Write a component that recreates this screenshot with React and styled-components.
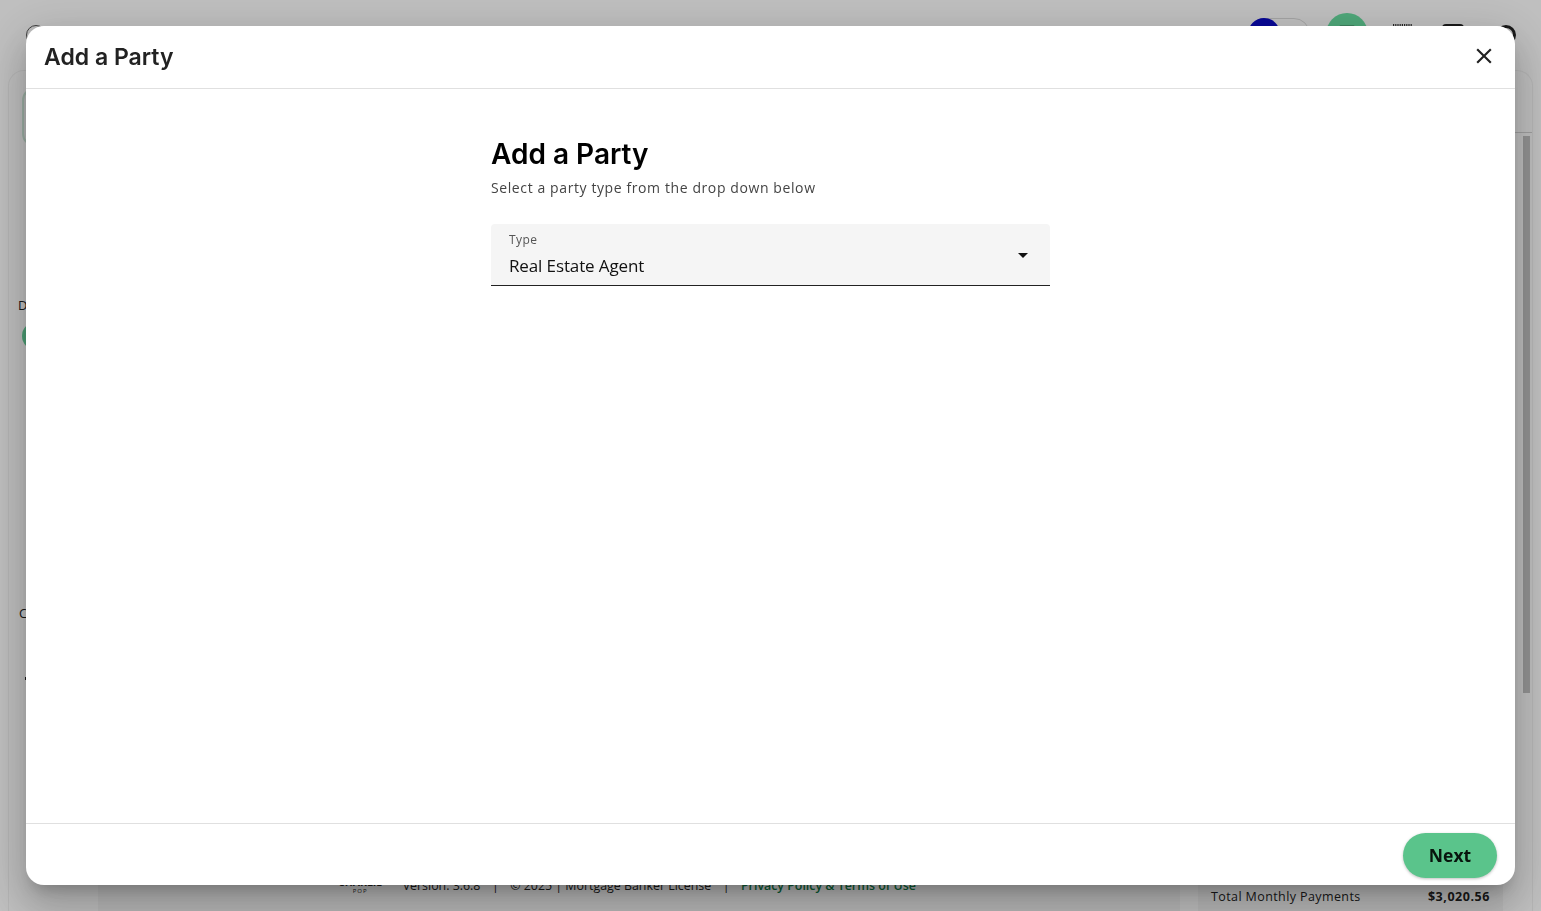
import React from "react";
import styled, { createGlobalStyle } from "styled-components";
import { MessageSquare } from "lucide-react";

const Global = createGlobalStyle`
  html, body { margin: 0; padding: 0; height: 100%; overflow: hidden; background: #fff; }
  body { font-family: "Open Sans", "Noto Sans", sans-serif; }
  * { box-sizing: border-box; }
`;

const Page = styled.div`
  width: 1541px;
  height: 911px;
  display: flex;
  flex-direction: column;
  overflow: hidden;
  color: #222;
`;
const TopBar = styled.header`
  height: 70px;
  flex: none;
  display: flex;
  align-items: flex-start;
  padding: 13px 25px 0 26px;
`;
const CornerMark = styled.div`
  width: 20px;
  height: 20px;
  margin-top: 12px;
  margin-right: auto;
  border: 1.5px solid #555;
  border-radius: 50%;
`;
const Toggle = styled.div`
  width: 62px;
  height: 32px;
  margin-top: 5px;
  margin-right: 16px;
  border: 1px solid #ddd;
  border-radius: 16px;
  display: flex;
`;
const ToggleKnob = styled.span`
  width: 32px;
  height: 32px;
  margin: -1px 0 0 -1px;
  border-radius: 50%;
  background: #0a0ac8;
`;
const Avatar = styled.div`
  width: 42px;
  height: 42px;
  border-radius: 50%;
  background: #69dfa2;
  color: #111;
  display: flex;
  align-items: center;
  justify-content: center;
  margin-right: 25px;
`;
const CalendarGlyph = styled.svg`
  width: 19px;
  height: 24px;
  margin-top: 10px;
  margin-right: 30px;
  color: #333;
`;
const ChatBox = styled.div`
  width: 22px;
  height: 24px;
  margin-top: 11px;
  margin-right: 32px;
  border: 2px solid #222;
  border-radius: 4px;
`;
const Dark = styled.div`
  width: 20px;
  height: 20px;
  margin-top: 12px;
  border: 3px solid #222;
  border-radius: 50%;
`;
const Shell = styled.div`
  flex: 1;
  min-height: 0;
  margin: 0 8px;
  border: 1px solid #f2f2f2;
  border-bottom: 0;
  border-radius: 16px 16px 0 0;
  display: flex;
`;
const Rail = styled.aside`
  width: 89px;
  flex: none;
  padding: 17px 0 0 9px;
  display: flex;
  flex-direction: column;
  font-size: 13px;
`;
const RailCard = styled.div`
  width: 60px;
  height: 58px;
  margin-left: 4px;
  border: 2px solid #cfe9da;
  border-radius: 12px;
  background: #f4f6f5;
`;
const RailLabel = styled.div`
  margin-top: ${(p) => p.$top}px;
  margin-left: ${(p) => p.$left || 0}px;
  line-height: 18px;
`;
const RailDot = styled.div`
  width: 28px;
  height: 28px;
  margin: 8px 0 0 4px;
  border-radius: 50%;
  background: #66d39c;
`;
const RailMark = styled.div`
  width: 3px;
  height: 3px;
  margin: 55px 0 0 7px;
  background: #222;
`;
const Main = styled.main`
  flex: 1;
  display: flex;
  flex-direction: column;
  justify-content: flex-end;
`;
const FooterBar = styled.footer`
  height: 50px;
  padding: 0 0 17px 240px;
  background: #f6f6f6;
  display: flex;
  align-items: flex-end;
  gap: 11.5px;
  font-size: 12.4px;
  line-height: 16px;
  white-space: nowrap;
`;
const Brand = styled.div`
  display: flex;
  flex-direction: column;
  align-items: center;
  margin-right: 9px;
  margin-bottom: -1px;
  font-weight: 700;
  font-size: 10.5px;
  line-height: 11px;
`;
const BrandSub = styled.span`
  font-size: 6px;
  line-height: 7px;
  font-weight: 400;
  letter-spacing: 1px;
`;
const FootLink = styled.span`
  color: #0f7a46;
  font-weight: 600;
`;
const Side = styled.aside`
  width: 305px;
  flex: none;
  margin: 0 12px 0 18px;
  display: flex;
  flex-direction: column;
  justify-content: flex-end;
  background: #f6f6f6;
`;
const SideRow = styled.div`
  display: flex;
  justify-content: space-between;
  padding: 0 13px 6px 13px;
  font-size: 12.5px;
  line-height: 17px;
  letter-spacing: 0.4px;
`;
const SideAmount = styled.b`
  font-weight: 700;
  letter-spacing: 0.55px;
`;
const Gutter = styled.div`
  width: 17px;
  flex: none;
  display: flex;
  flex-direction: column;
`;
const GutterLine = styled.div`
  height: 1px;
  margin-top: 61px;
  background: #d4d4d4;
`;
const Track = styled.div`
  width: 7px;
  height: 557px;
  margin: 3px 0 0 8px;
  background: #c4c4c4;
`;

const Scrim = styled.div`
  position: fixed;
  inset: 0;
  background: rgba(0, 0, 0, 0.25);
`;
const Modal = styled.div`
  position: fixed;
  left: 26px;
  top: 26px;
  width: 1489px;
  height: 859px;
  background: #fff;
  border-radius: 18px;
  display: flex;
  flex-direction: column;
  overflow: hidden;
  box-shadow: 0 11px 15px -7px rgba(0, 0, 0, 0.2), 0 24px 38px 3px rgba(0, 0, 0, 0.14),
    0 9px 46px 8px rgba(0, 0, 0, 0.12);
`;
const ModalHead = styled.div`
  height: 63px;
  flex: none;
  padding: 0 18px;
  display: flex;
  align-items: center;
  justify-content: space-between;
  border-bottom: 1px solid #e0e0e0;
`;
const ModalTitle = styled.h2`
  margin: 0;
  font-family: Inter, "Noto Sans", sans-serif;
  font-size: 23px;
  font-weight: 600;
  color: #222;
`;
const CloseBtn = styled.button`
  width: 26px;
  height: 26px;
  padding: 0;
  margin: -2px 0 0 0;
  border: 0;
  background: none;
  color: #222;
  display: flex;
`;
const ModalBody = styled.div`
  flex: 1;
  display: flex;
  justify-content: center;
`;
const Form = styled.div`
  width: 559px;
  padding-top: 47px;
`;
const Heading = styled.h1`
  margin: 0;
  font-family: Inter, "Noto Sans", sans-serif;
  font-size: 28px;
  line-height: 36px;
  font-weight: 600;
  color: #000;
`;
const Sub = styled.p`
  margin: 6px 0 0;
  font-size: 14px;
  line-height: 20px;
  letter-spacing: 0.6px;
  color: #444;
`;
const Select = styled.div`
  position: relative;
  height: 62px;
  margin-top: 26px;
  padding: 7px 18px 0;
  background: #f5f5f5;
  border-radius: 4px 4px 0 0;
  border-bottom: 1px solid #222;
`;
const SelectLabel = styled.div`
  font-size: 12px;
  line-height: 17px;
  letter-spacing: 0.4px;
  color: #555;
`;
const SelectValue = styled.div`
  margin-top: 6px;
  font-size: 17px;
  line-height: 24px;
  letter-spacing: -0.12px;
  color: #111;
`;
const Caret = styled.svg`
  position: absolute;
  right: 15px;
  top: 19px;
  width: 24px;
  height: 24px;
  fill: #111;
`;
const ModalFoot = styled.div`
  height: 62px;
  flex: none;
  padding: 9px 18px 0;
  display: flex;
  justify-content: flex-end;
  align-items: flex-start;
  border-top: 1px solid #e0e0e0;
`;
const NextBtn = styled.button`
  width: 94px;
  height: 45px;
  padding: 0 0 2px;
  border: 0;
  border-radius: 23px;
  background: #5ac48b;
  font-family: "Open Sans", "Noto Sans", sans-serif;
  font-size: 17.5px;
  font-weight: 700;
  color: #08140d;
  box-shadow: 0 1px 3px rgba(0, 0, 0, 0.25);
`;

export default function App() {
  return (
    <>
      <Global />
      <Page>
        <TopBar>
          <CornerMark />
          <Toggle>
            <ToggleKnob />
          </Toggle>
          <Avatar>
            <MessageSquare size={20} />
          </Avatar>
          <CalendarGlyph viewBox="0 0 19 24">
            <path d="M0 2.5H19" stroke="currentColor" strokeWidth="3" strokeDasharray="1.2 1" fill="none" />
          </CalendarGlyph>
          <ChatBox />
          <Dark />
        </TopBar>
        <Shell>
          <Rail>
            <RailCard />
            <RailLabel $top={150}>Details</RailLabel>
            <RailDot />
            <RailLabel $top={254} $left={1}>Contacts</RailLabel>
            <RailMark />
          </Rail>
          <Main>
            <FooterBar>
              <Brand>
                CHARLIE
                <BrandSub>POP</BrandSub>
              </Brand>
              <span>Version: 3.6.8</span>
              <span>|</span>
              <span>© 2025 | Mortgage Banker License</span>
              <span>|</span>
              <FootLink>Privacy Policy &amp; Terms of Use</FootLink>
            </FooterBar>
          </Main>
          <Side>
            <SideRow>
              <span>Total Monthly Payments</span>
              <SideAmount>$3,020.56</SideAmount>
            </SideRow>
          </Side>
          <Gutter>
            <GutterLine />
            <Track />
          </Gutter>
        </Shell>
      </Page>
      <Scrim />
      <Modal role="dialog" aria-label="Add a Party">
        <ModalHead>
          <ModalTitle>Add a Party</ModalTitle>
          <CloseBtn aria-label="Close">
            <svg viewBox="0 0 24 24" width="26" height="26" fill="currentColor">
              <path d="M19 6.41 17.59 5 12 10.59 6.41 5 5 6.41 10.59 12 5 17.59 6.41 19 12 13.41 17.59 19 19 17.59 13.41 12z" />
            </svg>
          </CloseBtn>
        </ModalHead>
        <ModalBody>
          <Form>
            <Heading>Add a Party</Heading>
            <Sub>Select a party type from the drop down below</Sub>
            <Select>
              <SelectLabel>Type</SelectLabel>
              <SelectValue>Real Estate Agent</SelectValue>
              <Caret viewBox="0 0 24 24">
                <path d="M7 10l5 5 5-5z" />
              </Caret>
            </Select>
          </Form>
        </ModalBody>
        <ModalFoot>
          <NextBtn>Next</NextBtn>
        </ModalFoot>
      </Modal>
    </>
  );
}
